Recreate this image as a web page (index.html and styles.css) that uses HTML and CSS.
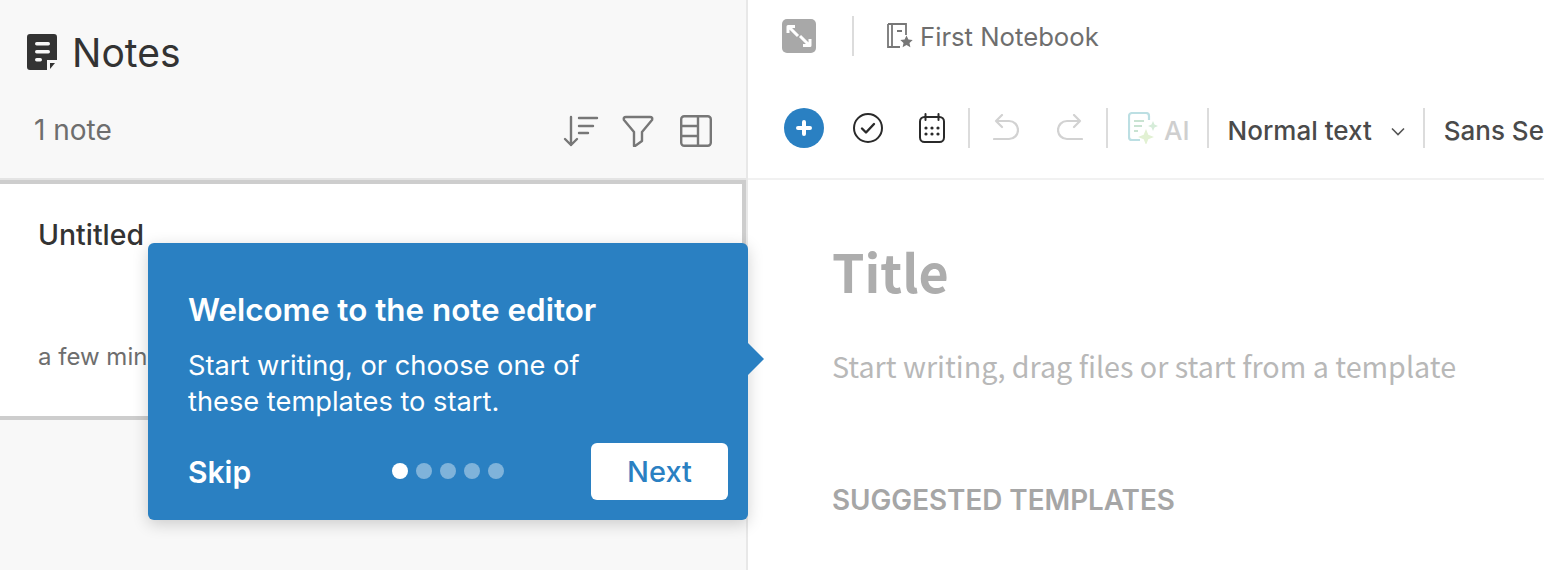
FILE: index.html
```html
<!DOCTYPE html>
<html lang="en">
<head>
<meta charset="utf-8">
<title>Notes</title>
<link rel="stylesheet" href="styles.css">
</head>
<body>
<div class="app">
  <aside class="sidebar">
    <header class="side-head">
      <div class="side-title">
        <svg class="notes-icon" width="30" height="36" viewBox="0 0 30 36">
          <path d="M3 0H27a3 3 0 0 1 3 3V26H20V36H3a3 3 0 0 1-3-3V3a3 3 0 0 1 3-3Z" fill="#333"/>
          <path d="M23 29H28L23 35Z" fill="#333"/>
          <rect x="8" y="8" width="15" height="3.400" rx="1.700" fill="#f8f8f8"/>
          <rect x="8" y="16" width="15" height="3.400" rx="1.700" fill="#f8f8f8"/>
          <rect x="8" y="24" width="7" height="3.400" rx="1.700" fill="#f8f8f8"/>
        </svg>
        <h1>Notes</h1>
      </div>
      <div class="side-meta">
        <span class="count">1 note</span>
        <div class="side-tools">
          <svg width="36" height="32" viewBox="0 0 36 32" fill="none" stroke="#777" stroke-width="2.400" stroke-linecap="round" stroke-linejoin="round"><path d="M8 2V30M2 24l6 6 6-6"/><path d="M16 3H34M16 11H30M16 18H25"/></svg>
          <svg class="t-funnel" width="32" height="32" viewBox="0 0 32 32" fill="none" stroke="#777" stroke-width="2.400" stroke-linejoin="round"><path d="M4 2H28Q31 2 30 5L20 17V26L13 31H12V17L2 5Q1 2 4 2Z"/></svg>
          <svg width="32" height="32" viewBox="0 0 32 32" fill="none" stroke="#777" stroke-width="2.400"><rect x="1.200" y="1.200" width="29.600" height="29.600" rx="3"/><path d="M18 1V31M1 11H18M1 21H18"/></svg>
        </div>
      </div>
    </header>
    <article class="note-card">
      <div class="note-name">Untitled</div>
      <div class="note-time">a few minutes ago</div>
    </article>
  </aside>

  <main class="editor">
    <div class="top-bar">
      <span class="expand">
        <svg width="34" height="34" viewBox="0 0 34 34"><rect width="34" height="34" rx="5" fill="#a8a8a8"/><path d="M6 14V7.500H13M7 8L16 17M28 20V26.500H21M27 26L18 17" fill="none" stroke="#fff" stroke-width="3" stroke-linejoin="round"/></svg>
      </span>
      <span class="vline tall"></span>
      <svg class="nb-icon" width="26" height="26" viewBox="0 0 26 26" fill="none" stroke="#777" stroke-width="1.800"><path d="M1 1H19V12M1 1V24H13M5 1V24M10 8H15"/><path d="M19.500 12.500l1.900 4 4.300.5-3.200 2.900.9 4.300-3.900-2.200-3.900 2.200.9-4.300-3.200-2.900 4.300-.5Z" fill="#777" stroke="none"/></svg>
      <span class="nb-name">First Notebook</span>
    </div>
    <div class="toolbar">
      <span class="add"><svg width="40" height="40" viewBox="0 0 40 40"><circle cx="20" cy="20" r="20" fill="#2a80c2"/><path d="M20 14V26M14 20H26" stroke="#fff" stroke-width="4" stroke-linecap="round"/></svg></span>
      <svg class="t-check" width="30" height="30" viewBox="0 0 30 30" fill="none" stroke="#2a2a2a" stroke-width="2"><circle cx="15" cy="15" r="14"/><path d="M9 15.500l4 4 8-8.500" stroke-width="2.400" stroke-linecap="round" stroke-linejoin="round"/></svg>
      <svg class="t-cal" width="26" height="30" viewBox="0 0 26 30" fill="none" stroke="#2a2a2a" stroke-width="2"><rect x="1" y="4" width="24" height="25" rx="4.500"/><path d="M6.500 1V7M19.500 1V7" stroke-linecap="round"/><g fill="#2a2a2a" stroke="none"><circle cx="7" cy="15" r="1.600"/><circle cx="13" cy="15" r="1.600"/><circle cx="19" cy="15" r="1.600"/><circle cx="7" cy="21" r="1.600"/><circle cx="13" cy="21" r="1.600"/><circle cx="19" cy="21" r="1.600"/></g></svg>
      <span class="vline t1"></span>
      <svg class="t-undo" width="26" height="28" viewBox="0 0 26 28" fill="none" stroke="#d2d2d2" stroke-width="2.200" stroke-linecap="round" stroke-linejoin="round"><path d="M9 1L3 7L9 13M3 7H16a8 8 0 0 1 0 18H1"/></svg>
      <svg class="t-redo" width="26" height="28" viewBox="0 0 26 28" fill="none" stroke="#d2d2d2" stroke-width="2.200" stroke-linecap="round" stroke-linejoin="round"><path d="M17 1L23 7L17 13M23 7H10a8 8 0 0 0 0 18H25"/></svg>
      <span class="vline t2"></span>
      <svg class="t-ai" width="30" height="32" viewBox="0 0 30 32" fill="none">
        <path d="M12 28H4a3 3 0 0 1-3-3V4a3 3 0 0 1 3-3H18a3 3 0 0 1 3 3V8" stroke="#bcdfe3" stroke-width="2.200"/>
        <path d="M6 9H16M6 14H14M6 19H10" stroke="#c9e3d2" stroke-width="2.200"/>
        <path d="M18 17l2.300 5.700 5.700 2.300-5.700 2.300-2.300 5.700-2.300-5.700-5.700-2.300 5.700-2.300Z" fill="#e2f1d3"/>
        <path d="M25 9l1.500 3.500 3.500 1.500-3.500 1.500-1.500 3.500-1.500-3.500-3.500-1.500 3.500-1.500Z" fill="#d6ecd9"/>
      </svg>
      <span class="ai-label">AI</span>
      <span class="vline t3"></span>
      <span class="style-name">Normal text</span>
      <svg class="chev" width="14" height="9" viewBox="0 0 14 9" fill="none" stroke="#555" stroke-width="1.600"><path d="M1 1.500l6 6 6-6"/></svg>
      <span class="vline t4"></span>
      <span class="font-name">Sans Serif</span>
    </div>
    <div class="doc">
      <div class="doc-title">Title</div>
      <div class="doc-hint">Start writing, drag files or start from a template</div>
      <div class="doc-label">SUGGESTED TEMPLATES</div>
    </div>
  </main>

  <section class="tip">
    <h2>Welcome to the note editor</h2>
    <p>Start writing, or choose one of<br>these templates to start.</p>
    <div class="tip-foot">
      <span class="skip">Skip</span>
      <div class="dots"><i class="on"></i><i></i><i></i><i></i><i></i></div>
      <span class="next">Next</span>
    </div>
  </section>
</div>
</body>
</html>
```
FILE: styles.css
```css
* { box-sizing: border-box; }
html, body { margin: 0; height: 100%; overflow: hidden; background: #fff; }
body { font-family: Inter, "Liberation Sans", sans-serif; color: #333; }
.app { position: relative; display: flex; width: 1544px; height: 570px; overflow: hidden; }

.sidebar { width: 748px; flex: none; background: #f8f8f8; border-right: 2px solid #e8e8e8; }
.side-head { height: 180px; display: flex; flex-direction: column; padding: 34px 34px 0 27px; }
.side-title { display: flex; align-items: center; gap: 15px; height: 36px; }
.side-title h1 { margin: 2px 0 0; font-size: 39px; font-weight: 400; line-height: 36px; color: #333; }
.notes-icon { flex: none; }
.side-meta { display: flex; justify-content: space-between; align-items: center; margin-top: 38px; padding-left: 7px; height: 44px; }
.count { font-size: 28px; color: #6e6e6e; }
.side-tools { display: flex; align-items: center; gap: 23px; margin-top: 1px; }
.t-funnel { margin-right: 3px; }

.note-card { height: 240px; margin-top: 0; background: #fff; border-top: 4px solid #cdcdcd; border-bottom: 4px solid #cdcdcd; border-right: 4px solid #cdcdcd; padding: 35px 38px 0; box-shadow: 0 -2px 0 #e4e4e4; }
.note-name { font-size: 28.400px; font-weight: 500; line-height: 32px; color: #333; }
.note-time { margin-top: 92px; font-size: 24px; line-height: 28px; color: #6e6e6e; white-space: nowrap; }

.editor { flex: 1; min-width: 0; display: flex; flex-direction: column; }
.top-bar { height: 72px; display: flex; align-items: center; padding-left: 34px; }
.expand { display: flex; }
.vline { display: block; width: 2px; background: #dcdcdc; flex: none; }
.vline.tall { height: 40px; margin: 0 33px 0 36px; }
.nb-icon { flex: none; }
.nb-name { margin-left: 7px; font-size: 25.700px; color: #6e6e6e; white-space: nowrap; }

.toolbar { height: 108px; display: flex; align-items: center; padding: 6px 0 0 36px; border-bottom: 2px solid #f1f1f1; white-space: nowrap; overflow: hidden; }
.add { display: flex; }
.t-check { margin-left: 29px; flex: none; }
.t-cal { margin-left: 36px; flex: none; }
.toolbar .vline { height: 40px; }
.t1 { margin-left: 23px; }
.t-undo { margin-left: 23px; flex: none; }
.t-redo { margin-left: 38px; flex: none; }
.t2 { margin-left: 23px; }
.t-ai { margin-left: 20px; flex: none; }
.ai-label { margin: 5px 0 0 6px; font-size: 26px; font-weight: 500; color: #cfcfcf; }
.t3 { margin-left: 17px; }
.style-name { margin: 4px 0 0 19px; font-size: 26px; font-weight: 500; color: #4a4a4a; }
.chev { margin: 6px 0 0 19px; flex: none; }
.t4 { margin-left: 18px; }
.font-name { margin: 4px 0 0 19px; font-size: 26px; font-weight: 500; color: #4a4a4a; }

.doc { padding: 53px 0 0 84px; }
.doc-title { font-family: "Noto Sans CJK SC", "Noto Sans", sans-serif; font-size: 52px; font-weight: 700; line-height: 76px; color: #adadad; }
.doc-hint { margin-top: 37px; font-family: "Noto Sans CJK SC", "Noto Sans", sans-serif; font-size: 28.700px; line-height: 40px; color: #b8b8b8; white-space: nowrap; }
.doc-label { margin-top: 97px; font-size: 27.800px; font-weight: 600; color: #a6a6a6; white-space: nowrap; }

.tip { position: absolute; left: 148px; top: 243px; width: 600px; height: 277px; padding: 47px 20px 20px 40px; background: #2a80c2; border-radius: 6px; color: #fff; box-shadow: 0 4px 16px rgba(0,0,0,.18); }
.tip::after { content: ""; position: absolute; left: 100%; top: 100px; border-style: solid; border-width: 16px 0 16px 16px; border-color: transparent transparent transparent #2a80c2; }
.tip h2 { margin: 0; font-size: 31.400px; font-weight: 600; line-height: 40px; }
.tip p { margin: 18px 0 0; font-size: 27.250px; line-height: 36px; }
.tip-foot { position: relative; display: flex; align-items: center; justify-content: space-between; margin-top: 23px; height: 57px; }
.skip { font-size: 30px; font-weight: 600; }
.dots { position: absolute; left: 204px; top: 20px; display: flex; gap: 8px; }
.dots i { display: block; width: 16px; height: 16px; border-radius: 50%; background: rgba(255,255,255,.4); }
.dots i.on { background: #fff; }
.next { display: flex; align-items: center; justify-content: center; width: 137px; height: 57px; background: #fff; border-radius: 6px; color: #2a80c2; font-size: 29px; font-weight: 500; }
```
